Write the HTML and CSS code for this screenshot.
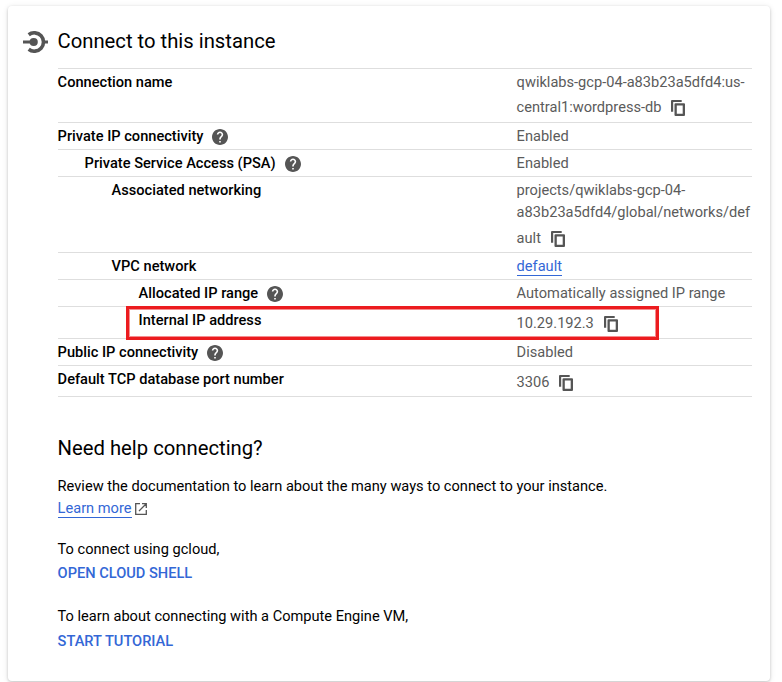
FILE: index.html
```html
<!DOCTYPE html>
<html lang="en">
<head>
<meta charset="utf-8">
<title>Connect to this instance</title>
<link rel="stylesheet" href="styles.css">
</head>
<body>
<svg class="defs" width="0" height="0" aria-hidden="true">
  <symbol id="help" viewBox="2 2 20 20"><path d="M12 2C6.48 2 2 6.48 2 12s4.48 10 10 10 10-4.480 10-10S17.520 2 12 2zm1 17h-2v-2h2v2zm2.070-7.750l-.9.920C13.450 12.900 13 13.500 13 15h-2v-.5c0-1.100.45-2.100 1.170-2.830l1.240-1.260c.37-.36.590-.86.590-1.410 0-1.100-.9-2-2-2s-2 .9-2 2H8c0-2.210 1.790-4 4-4s4 1.790 4 4c0 .88-.36 1.680-.93 2.250z"/></symbol>
  <symbol id="copy" viewBox="0 0 14 16"><path d="M1 0h9.700v2H2.200v9.700H0V1Q0 0 1 0zM4.500 3.200H13Q14 3.200 14 4.200V15Q14 16 13 16H4.500Q3.500 16 3.500 15V4.200Q3.500 3.200 4.500 3.200zM5.800 5.500v8.200h5.900V5.500z" fill-rule="evenodd"/></symbol>
</svg>
<main class="card">
  <header class="heading">
    <svg class="connect" viewBox="0 0 25 22"><path d="M5.700 3.700A9.200 9.200 0 1 1 5.700 18.300" fill="none" stroke="currentColor" stroke-width="3.600"/><circle cx="10.700" cy="11" r="4.100"/><path d="M0 9.500h10v3H0zM20 9.500h5v3h-5z"/></svg>
    <h1>Connect to this instance</h1>
  </header>
  <dl class="details">
    <div class="row tall">
      <dt><span>Connection name</span></dt>
      <dd><span class="line">qwiklabs-gcp-04-a83b23a5dfd4:us-</span><span class="line low">central1:wordpress-db<svg class="copy"><use href="#copy"/></svg></span></dd>
    </div>
    <div class="row"><dt><span>Private IP connectivity</span><svg class="help"><use href="#help"/></svg></dt><dd>Enabled</dd></div>
    <div class="row level1"><dt><span>Private Service Access (PSA)</span><svg class="help"><use href="#help"/></svg></dt><dd>Enabled</dd></div>
    <div class="row level2 network">
      <dt><span>Associated networking</span></dt>
      <dd><span class="line">projects/qwiklabs-gcp-04-</span><span class="line">a83b23a5dfd4/global/networks/def</span><span class="line last">ault<svg class="copy"><use href="#copy"/></svg></span></dd>
    </div>
    <div class="row level2"><dt><span>VPC network</span></dt><dd><a class="link">default</a></dd></div>
    <div class="row level3"><dt><span>Allocated IP range</span><svg class="help"><use href="#help"/></svg></dt><dd>Automatically assigned IP range</dd></div>
    <div class="row level3 internal"><dt><span>Internal IP address</span></dt><dd>10.29.192.3<svg class="copy"><use href="#copy"/></svg></dd><div class="highlight"></div></div>
    <div class="row"><dt><span>Public IP connectivity</span><svg class="help"><use href="#help"/></svg></dt><dd>Disabled</dd></div>
    <div class="row port"><dt><span>Default TCP database port number</span></dt><dd>3306<svg class="copy"><use href="#copy"/></svg></dd></div>
  </dl>
  <section class="support">
    <h2>Need help connecting?</h2>
    <p class="review">Review the documentation to learn about the many ways to connect to your instance.</p>
    <p class="learn"><a class="link">Learn more</a><svg class="external" viewBox="0 0 12 12"><path d="M5 .7H.7v10.600h10.600V7M7 .7h4.300V5M11 1L4 8" fill="none" stroke="currentColor" stroke-width="1.300"/></svg></p>
    <p class="prompt">To connect using gcloud,</p>
    <a class="action">OPEN CLOUD SHELL</a>
    <p class="prompt second">To learn about connecting with a Compute Engine VM,</p>
    <a class="action last-action">START TUTORIAL</a>
  </section>
</main>
</body>
</html>
```
FILE: styles.css
```css
* { box-sizing: border-box; }
body {
  margin: 0;
  padding: 6px 12px 1px 8px;
  background: #fff;
  color: #000;
  font: 400 14.61px/26px Roboto, sans-serif;
  overflow: hidden;
}
.defs { position: absolute; }
svg { flex: none; fill: currentColor; color: #555; }
h1, h2, p, dl, dd { margin: 0; }
h1, h2 { font-size: 20.25px; font-weight: 400; line-height: 28px; white-space: nowrap; }
.card {
  height: 675px;
  padding: 21px 18px 0 15px;
  border-radius: 4px;
  box-shadow: 0 1px 3px rgba(0,0,0,.18), 0 1px 6px rgba(0,0,0,.10);
}
.heading { display: flex; align-items: center; gap: 9.500px; height: 28px; }
.connect { width: 25px; height: 22px; margin-top: 2px; }
.details { margin: 13px 0 0 34.600px; border-bottom: 1px solid #dedede; }
.row {
  position: relative;
  display: grid;
  grid-template-columns: 459px 1fr;
  height: 27px;
  border-top: 1px solid #dedede;
  white-space: nowrap;
}
dt { display: flex; align-items: center; height: 26px; font-weight: 500; }
dd { display: flex; align-items: center; height: 26px; color: #5b5b5b; }
.level1 dt { padding-left: 27px; }
.level2 dt { padding-left: 54px; }
.level3 dt { padding-left: 81px; }
.line { display: flex; align-items: center; }
.tall { height: 54px; }
.tall dd { display: block; }
.low { height: 26px; margin-top: -1px; }
.network { height: 76px; }
.network dd { display: block; padding-top: 2px; line-height: 22px; }
.network .last { height: 30px; }
.internal { height: 32px; }
.internal dd { height: 32px; }
.port { height: 31px; }
.port dd { height: 32px; }
.help { width: 16px; height: 16px; margin: 2px 0 0 9px; }
.copy { width: 14px; height: 16px; margin: 2px 0 0 10px; }
.link { color: #3367d6; line-height: 18px; border-bottom: 1px solid #3367d6; }
.highlight {
  position: absolute;
  left: 68.400px;
  top: -1px;
  width: 533px;
  height: 34px;
  border: 3px solid #ec1c1f;
  box-shadow: inset 0 0 0 1px rgba(236,28,31,.5);
  z-index: 1;
}
.support { padding: 37px 0 0 34.600px; }
.review { margin-top: 11px; }
.learn { display: flex; align-items: center; height: 20px; margin-top: -1px; }
.external { width: 12px; height: 12px; margin: 2px 0 0 3px; }
.prompt { margin-top: 19px; line-height: 24px; }
.action { display: block; color: #3367d6; font-weight: 500; line-height: 24px; }
.last-action { margin-top: 1px; }
```
